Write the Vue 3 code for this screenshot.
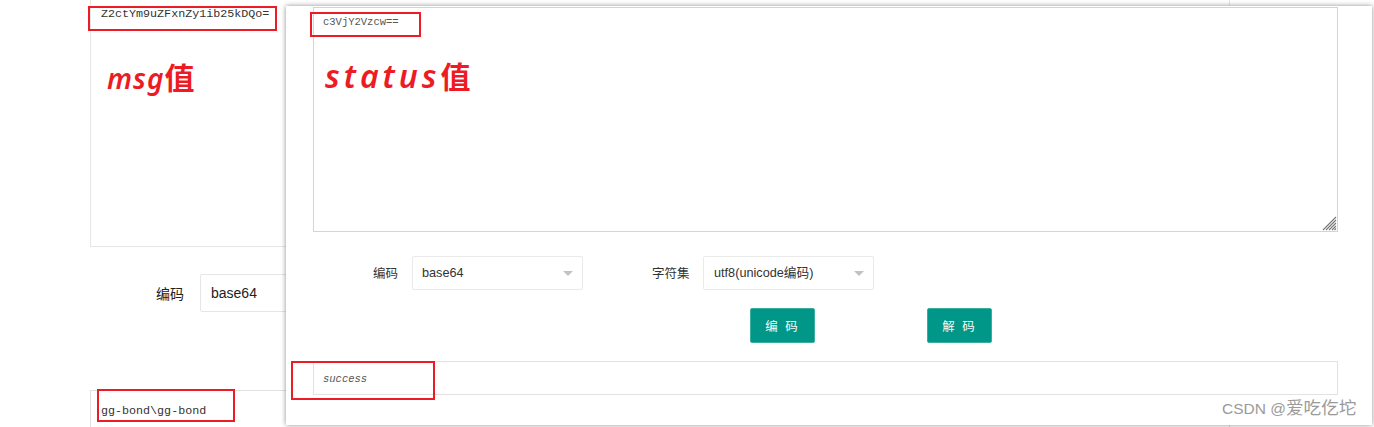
<script setup>
const primaryOptions = ['base64']
</script>

<template>
  <div class="page">
    <section class="back">
      <div class="back-text">Z2ctYm9uZFxnZy1ib25kDQo=</div>
      <div class="back-row">
        <span class="back-label">编码</span>
        <div class="back-select">{{ primaryOptions[0] }}</div>
      </div>
      <div class="back-output">gg-bond\gg-bond</div>
    </section>

    <section class="window">
      <div class="input">
        c3VjY2Vzcw==
        <svg class="grip" width="15" height="15" viewBox="0 0 15 15">
          <path d="M1 14 14 1M4 14 14 4M7 14 14 7M10 14 14 10M12.5 14 14 12.5" stroke="#777" stroke-width="1.1" fill="none" />
        </svg>
      </div>
      <div class="row">
        <span class="label first">编码</span>
        <div class="select">base64<i class="arrow"></i></div>
        <span class="label second">字符集</span>
        <div class="select charset">utf8(unicode编码)<i class="arrow"></i></div>
      </div>
      <div class="buttons">
        <button class="btn">编 码</button>
        <button class="btn">解 码</button>
      </div>
      <div class="output">success</div>
    </section>

    <div class="mark m1"></div>
    <div class="mark m2"></div>
    <div class="mark m3"></div>
    <div class="mark m4"></div>
    <div class="hand h1"><span class="latin l1">msg</span><span class="cjk">值</span></div>
    <div class="hand h2"><span class="latin l2">status</span><span class="cjk">值</span></div>
    <div class="watermark">CSDN @<span class="wm-cjk">爱吃仡坨</span></div>
  </div>
</template>

<style>
html, body { margin: 0; background: #fff; }
</style>

<style scoped>
.page {
  position: relative;
  width: 1374px;
  height: 427px;
  overflow: hidden;
  background: #fff;
  font-family: "Liberation Sans", "Noto Sans CJK SC", sans-serif;
}
.back {
  width: 1140px;
  margin-left: 90px;
  display: flex;
  flex-direction: column;
}
.back-text {
  box-sizing: border-box;
  height: 247px;
  border: 1px solid #e6e6e6;
  border-top: 0;
  padding: 6px 10px;
  font: 11.7px/16px "Liberation Mono", monospace;
  color: #333;
}
.back-row {
  display: flex;
  align-items: center;
  margin-top: 27px;
  padding-left: 66px;
}
.back-label {
  width: 30px;
  margin-right: 14px;
  font-size: 14px;
  color: #222;
}
.back-select {
  box-sizing: border-box;
  width: 300px;
  height: 38px;
  border: 1px solid #e6e6e6;
  border-radius: 2px;
  padding-left: 10px;
  font-size: 14px;
  line-height: 36px;
  color: #222;
}
.back-output {
  box-sizing: border-box;
  height: 37px;
  margin-top: 78px;
  border: 1px solid #e0e0e0;
  border-bottom: 0;
  padding: 12px 10px 0;
  font: 11.7px/16px "Liberation Mono", monospace;
  color: #333;
}
.window {
  position: absolute;
  left: 286px;
  top: 6px;
  box-sizing: border-box;
  width: 1086px;
  height: 419px;
  padding: 1px 0 0 27px;
  background: #fff;
  box-shadow: 0 0 5px rgba(0, 0, 0, 0.45);
}
.input {
  position: relative;
  box-sizing: border-box;
  width: 1025px;
  height: 225px;
  border: 1px solid #d4d4d4;
  padding: 7px 9px;
  font: 10.5px/14px "Liberation Mono", monospace;
  color: #555;
}
.grip {
  position: absolute;
  right: 0;
  bottom: 0;
}
.row {
  display: flex;
  align-items: center;
  height: 34px;
  margin: 24px 0 0 60px;
  font-size: 12.7px;
  color: #333;
}
.label { white-space: nowrap; margin-top: -1px; }
.label.first { width: 25px; margin-right: 14px; font-size: 12.5px; }
.label.second { width: 38px; margin: -1px 13px 0 69px; font-size: 12.5px; }
.select {
  position: relative;
  box-sizing: border-box;
  width: 171px;
  height: 34px;
  border: 1px solid #eaeaea;
  border-radius: 2px;
  padding-left: 9px;
  line-height: 32px;
  color: #333;
}
.select.charset { padding-left: 10px; }
.arrow {
  position: absolute;
  right: 9px;
  top: 14px;
  width: 0;
  height: 0;
  border: 5px solid transparent;
  border-top-color: #c2c2c2;
  border-bottom: 0;
}
.buttons {
  display: flex;
  gap: 112px;
  margin: 18px 0 0 437px;
}
.btn {
  width: 65px;
  height: 35px;
  border: 1px solid #3aaf9f;
  border-radius: 2px;
  padding: 0;
  background: #009688;
  color: #f2fbf9;
  font: 12.5px "Liberation Sans", "Noto Sans CJK SC", sans-serif;
  letter-spacing: 2px;
}
.output {
  box-sizing: border-box;
  width: 1025px;
  height: 34px;
  margin-top: 18px;
  border: 1px solid #e2e2e2;
  padding: 10px 9px;
  font: italic 10.5px/14px "Liberation Mono", monospace;
  color: #555;
}
.mark {
  position: absolute;
  box-sizing: border-box;
  border: 2px solid #ed1c24;
}
.m1 { left: 88px; top: 6px; width: 189px; height: 25px; }
.m2 { left: 310px; top: 12px; width: 111px; height: 25px; }
.m3 { left: 291px; top: 361px; width: 144px; height: 39px; }
.m4 { left: 97px; top: 389px; width: 138px; height: 33px; }
.hand {
  position: absolute;
  color: #ed1c24;
  font-family: "Noto Sans", "Noto Sans CJK SC", sans-serif;
  line-height: 36px;
  white-space: nowrap;
}
.latin { font-style: italic; font-weight: 600; }
.l1 { font-size: 28px; letter-spacing: 1px; }
.l2 { font-size: 32px; letter-spacing: 4px; }
.cjk { font-family: "Noto Sans CJK SC", sans-serif; font-weight: 700; font-size: 30px; }
.h1 { left: 107px; top: 58px; }
.h2 { left: 325px; top: 57px; }
.watermark {
  position: absolute;
  left: 1222px;
  top: 399px;
  font-size: 15.5px;
  line-height: 18px;
  color: #9a9a9a;
  white-space: nowrap;
}
.wm-cjk { font-size: 17.6px; }
</style>
